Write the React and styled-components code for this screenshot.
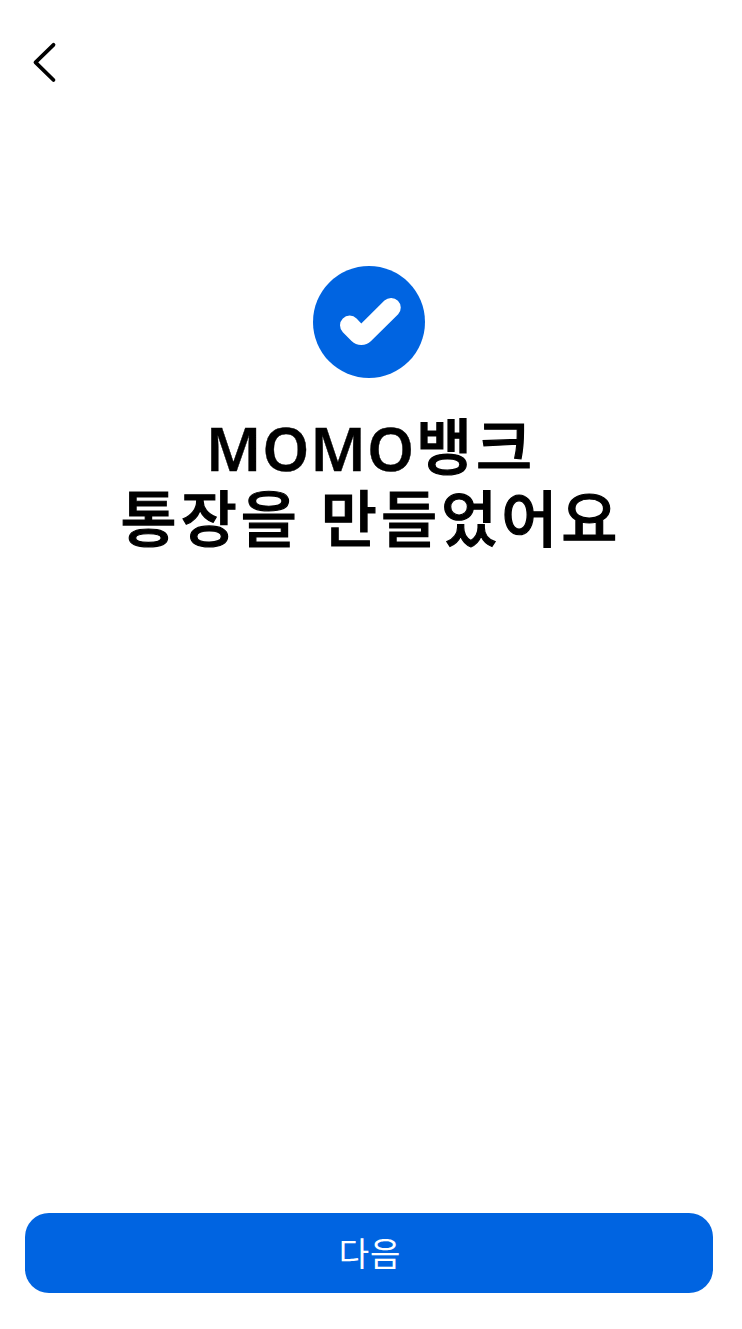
import React from 'react';
import styled, { createGlobalStyle } from 'styled-components';

const GlobalStyle = createGlobalStyle`
  * { box-sizing: border-box; }
  body { margin: 0; background: #fff; }
`;

const Screen = styled.div`
  display: flex;
  flex-direction: column;
  height: 1329px;
  width: 742px;
  padding: 42px 29px 36px 25px;
  background: #fff;
  font-family: 'Noto Sans', 'Noto Sans CJK KR', sans-serif;
`;

const BackButton = styled.button`
  display: flex;
  width: 40px;
  height: 42px;
  padding: 0;
  border: 0;
  background: none;
`;

const Result = styled.main`
  flex: 1;
  display: flex;
  flex-direction: column;
  align-items: center;
  padding-top: 182px;
`;

const Badge = styled.svg`
  display: block;
  width: 112px;
  height: 112px;
`;

const Title = styled.h1`
  display: flex;
  flex-direction: column;
  margin: 33px 0 0;
  padding-left: 4px;
  color: #000;
  font-size: 61px;
  font-weight: 500;
  line-height: 72px;
  letter-spacing: 4px;
  text-align: center;
  white-space: nowrap;
  -webkit-text-stroke: 1.2px #000;
`;

const TitleLine = styled.span`
  display: block;
  height: 72px;
`;

const BrandName = styled.span`
  margin-right: 1px;
  font-size: 60px;
  font-weight: 600;
  line-height: 1;
  letter-spacing: 0.8px;
  vertical-align: -1px;
  -webkit-text-stroke: 0.4px #000;
`;

const NextButton = styled.button`
  height: 80px;
  border: 0;
  padding: 0 0 2px 2px;
  border-radius: 24px;
  background: #0064e1;
  color: #fff;
  font-family: 'Noto Sans CJK KR', sans-serif;
  font-size: 33px;
  font-weight: 400;
  letter-spacing: 0.8px;
`;

export default function App() {
  return (
    <Screen>
      <GlobalStyle />
      <BackButton aria-label="뒤로">
        <svg width="40" height="42" viewBox="0 0 40 42" fill="none">
          <path d="M28.5 2.8L10.5 20.4L28.5 38" stroke="#000" strokeWidth="3.8" strokeLinecap="round" strokeLinejoin="round" />
        </svg>
      </BackButton>
      <Result>
        <Badge viewBox="0 0 112 112">
          <circle cx="56" cy="56" r="56" fill="#0064e1" />
          <path
            d="M48.3 57.4L71.44 34.5A9.7 9.7 0 0 1 85.16 48.2L58.06 74.96A13.8 13.8 0 0 1 38.54 74.96L29.84 66.16A9.7 9.7 0 0 1 43.56 52.44Z"
            fill="#fff"
          />
        </Badge>
        <Title>
          <TitleLine><BrandName>MOMO</BrandName>뱅크</TitleLine>
          <TitleLine>통장을 만들었어요</TitleLine>
        </Title>
      </Result>
      <NextButton>다음</NextButton>
    </Screen>
  );
}
